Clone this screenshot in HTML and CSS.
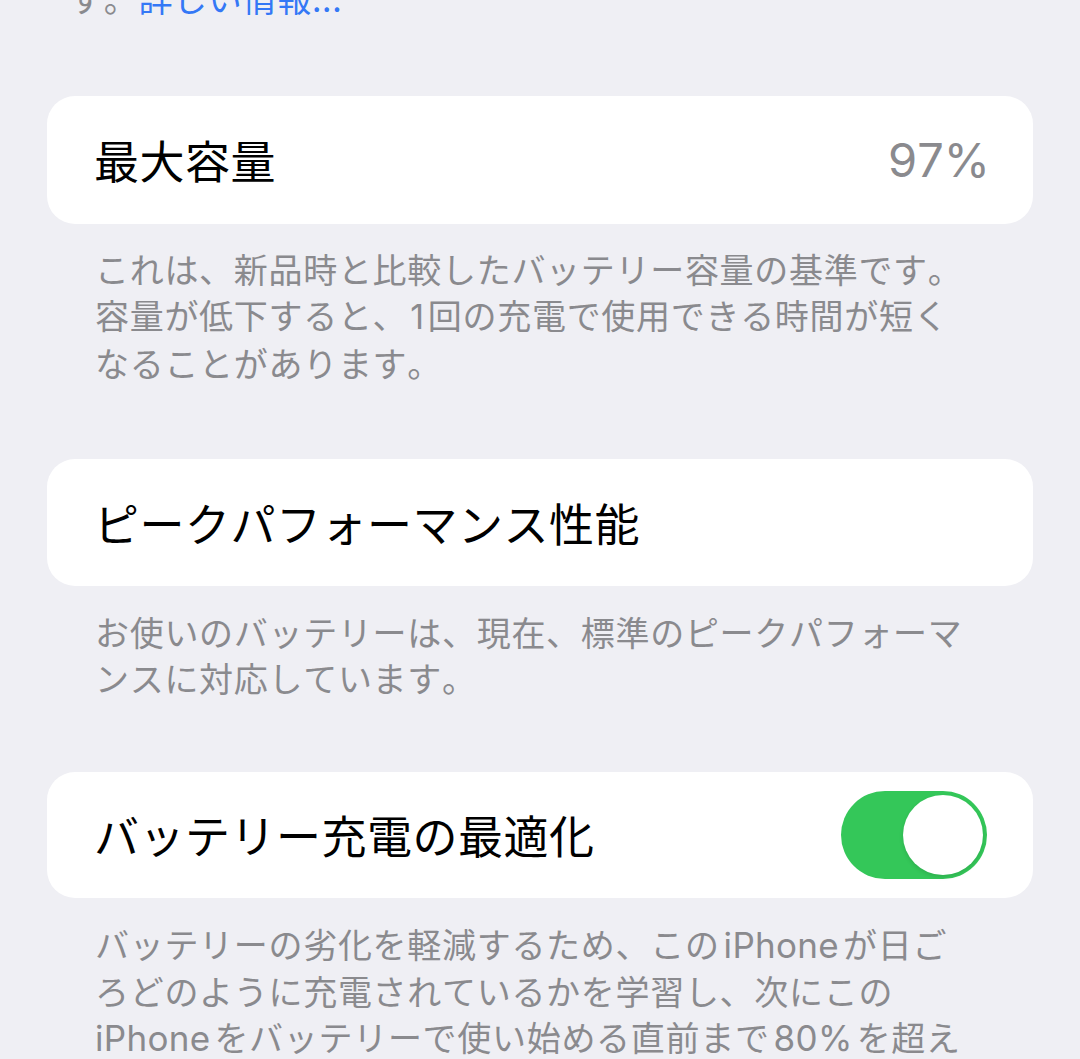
FILE: index.html
```html
<!DOCTYPE html>
<html lang="ja">
<head>
<meta charset="utf-8">
<title>バッテリーの状態</title>
<link rel="stylesheet" href="styles.css">
</head>
<body>
<div class="page">
  <p class="note note-top">す。<span class="link">詳しい情報...</span></p>

  <div class="card card-1">
    <span class="title">最大容量</span>
    <span class="value">97%</span>
  </div>
  <p class="note note-1">これは、新品時と比較したバッテリー容量の基準です。<br>容量が低下すると、<span class="num">1</span>回の充電で使用できる時間が短く<br>なることがあります。</p>

  <div class="card card-2">
    <span class="title">ピークパフォーマンス性能</span>
  </div>
  <p class="note note-2">お使いのバッテリーは、現在、標準のピークパフォーマ<br>ンスに対応しています。</p>

  <div class="card card-3">
    <span class="title">バッテリー充電の最適化</span>
    <span class="toggle"><span class="knob"></span></span>
  </div>
  <p class="note note-3">バッテリーの劣化を軽減するため、この<span class="lat">iPhone</span>が日ご<br>ろどのように充電されているかを学習し、次にこの<br><span class="lat lat-start">iPhone</span>をバッテリーで使い始める直前まで<span class="lat">80%</span>を超え</p>
</div>
</body>
</html>
```

FILE: styles.css
```css
html, body {
  margin: 0;
  padding: 0;
  background: #efeff4;
  overflow: hidden;
}

body {
  font-family: "Noto Sans CJK JP", "Noto Sans", sans-serif;
  font-kerning: none;
  color: #000;
}

.page {
  padding: 0 47px;
}

.note {
  margin: 0;
  padding-left: 48px;
  font-size: 34px;
  line-height: 46px;
  color: #8a8a8e;
  white-space: nowrap;
  letter-spacing: 0.7px;
}

.note-top {
  margin-top: -25px;
  padding-left: 22px;
}

.link {
  color: #3478f6;
}

.note-1 { margin-top: 22px; }
.note-2 { margin-top: 23px; }
.note-3 { margin-top: 23px; }

.num {
  font-family: Inter, "Noto Sans", sans-serif;
  margin: 0 3px;
}

.lat {
  font-family: Inter, "Noto Sans", sans-serif;
  font-size: 35px;
  margin: 0 4px;
  letter-spacing: 0.3px;
}

.lat-start {
  margin-left: 0;
}

.card {
  background: #fff;
  border-radius: 28px;
  display: flex;
  align-items: center;
  justify-content: space-between;
  padding: 0 46px 0 47px;
}

.card-1 { margin-top: 75px; height: 128px; }
.card-2 { margin-top: 73px; height: 127px; }
.card-3 { margin-top: 71px; height: 126px; }

.title {
  font-size: 45px;
  line-height: 56px;
  letter-spacing: 0.5px;
}

.value {
  font-family: Inter, "Noto Sans", sans-serif;
  font-size: 47px;
  line-height: 56px;
  letter-spacing: 0;
  color: #8a8a8e;
  margin-right: -3px;
}

.toggle {
  width: 146px;
  height: 88px;
  border-radius: 44px;
  background: #34c759;
  display: flex;
  align-items: center;
  justify-content: flex-end;
  padding: 0 4px;
  box-sizing: border-box;
}

.knob {
  width: 80px;
  height: 80px;
  border-radius: 50%;
  background: #fff;
  box-shadow: 0 2px 4px rgba(0, 0, 0, 0.12);
}
```
